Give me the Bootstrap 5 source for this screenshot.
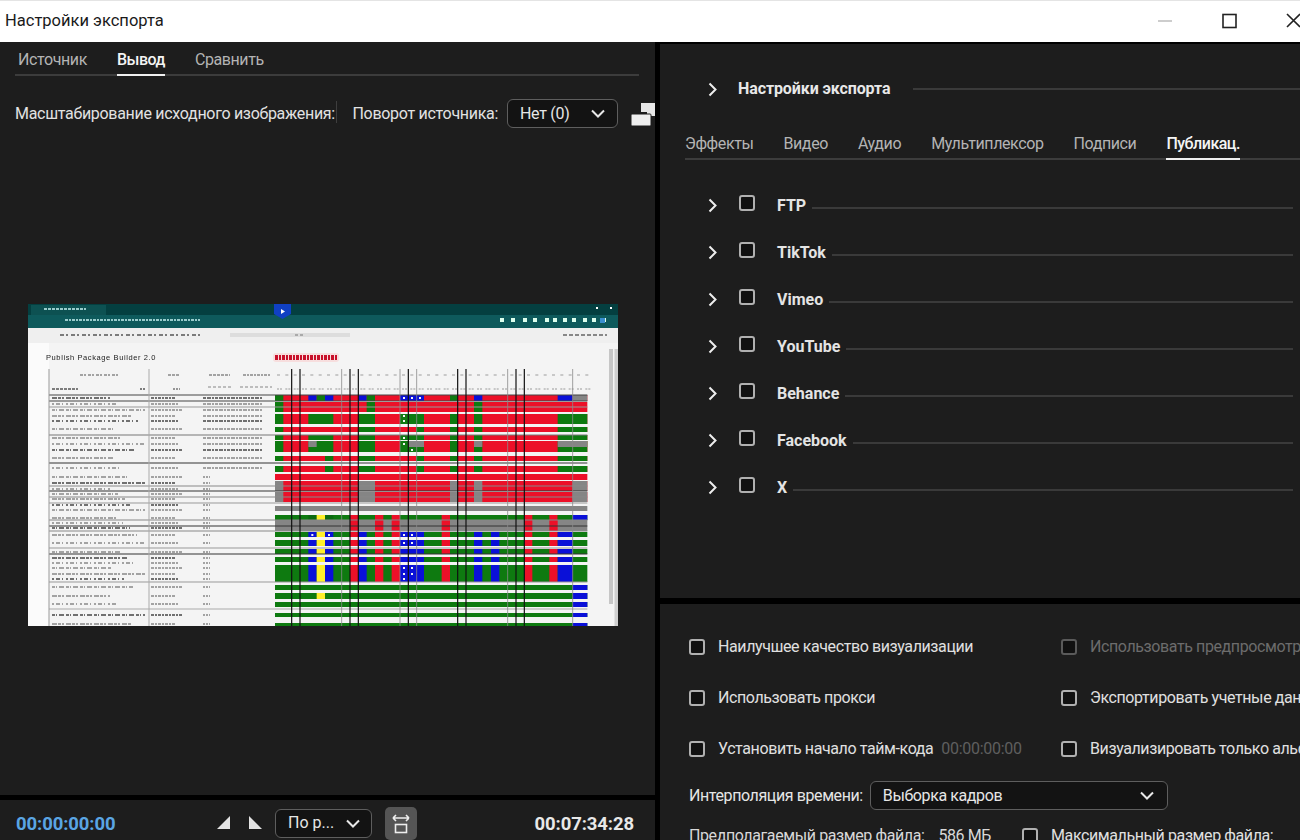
<!DOCTYPE html>
<html lang="ru">
<head>
<meta charset="utf-8">
<title>Настройки экспорта</title>
<link href="https://cdn.jsdelivr.net/npm/bootstrap@5.3.0/dist/css/bootstrap.min.css" rel="stylesheet">
<style>
html,body{height:840px;overflow:hidden}
body{background:#000;font-family:"Roboto","Liberation Sans",sans-serif;font-size:16px;color:#d8d8d8;width:1300px}
.title-strip{height:42px;background:#fff;color:#1a1a1a;border-top:1px solid #e4e4e4;padding-left:5px;font-size:16.5px;flex:none}
.win-btns{margin-left:auto;height:100%;position:relative;width:150px}
.win-btns svg{position:absolute;left:0;top:0}
.work{height:798px}
.left-col{width:655px;flex:none;margin-right:5px}
.left-main{height:753px;background:#1d1d1d;margin-bottom:5px}
.left-foot{height:40px;background:#1d1d1d}
.right-col{width:640px;flex:none}
.right-top{height:554px;background:#1d1d1d;margin-top:2px;margin-bottom:6px;overflow:hidden}
.right-bot{height:236px;background:#1d1d1d;overflow:hidden}
.tab-row{margin:0 16px 0 15px;height:34px;border-bottom:2px solid #3c3c3c;gap:30px;padding-left:3px}
.tab-item{height:34px;padding-top:6px;color:#b4b4b4;white-space:nowrap;letter-spacing:-.4px}
.tab-item.on{color:#f4f4f4;border-bottom:2px solid #f0f0f0;font-weight:500;letter-spacing:-.5px}
.scale-row{height:29px;margin-top:23px;padding-left:15px;white-space:nowrap;color:#e2e2e2;letter-spacing:-.3px}
.tick{width:1px;height:22px;background:#3e3e3e;margin:0 16px 4px 1px}
.pick{border:1.5px solid #5e5e5e;border-radius:6px;background:#131313;color:#e6e6e6;height:29px;white-space:nowrap;justify-content:space-between}
.pick-rot{width:111px;padding:0 12px;margin-left:9px;flex:none}
.rot-ico{margin-left:13px;flex:none}
.thumb{display:block;margin:176px 0 0 28px;filter:blur(.5px)}
.foot-time{font-weight:700;font-size:18.5px;letter-spacing:-.1px;padding-top:9px}
.t-blue{color:#5aa5e4;margin-left:16px;width:199px}
.t-white{color:#e8e8e8;margin-left:auto;margin-right:21px}
.tri-ico{margin-top:6px}
.pick-zoom{width:97px;padding:0 11px 0 12px;margin:6px 13px 0 13px}
.fit-btn{width:32px;height:33px;background:#555;border-radius:5px;margin-top:7px}
.sect-head{height:24px;margin-top:33px;padding-left:48px;font-weight:700;color:#e8e8e8;white-space:nowrap}
.sect-head .sect-label{margin-left:20px;letter-spacing:-.1px}
.rule{flex:1;height:2px;background:#3a3a3a;margin-left:23px;margin-right:0}
.fx-tabs{margin:23px 0 0 25px;height:36px;border-bottom:2px solid #3c3c3c;gap:30px}
.fx-tabs .tab-item{height:36px;padding-top:8px}
.pub-list{margin-top:22px}
.pub-row{height:47px;padding-left:48px;padding-right:7px;font-weight:700;color:#e4e4e4}
.pub-row .form-check-input{margin:-6px 0 0 21px}
.pub-row .pub-name{margin-left:22px;white-space:nowrap}
.pub-row .rule{margin-left:6px;margin-top:5px}
.form-check-input.dark-box{width:16px;height:16px;background-color:#111;border:2px solid #b0b0b0;border-radius:3px;flex:none;float:none}
.form-check-input.dark-box.dim{border-color:#5a5a5a}
.opt-grid{padding:17px 0 0 29px}
.opt-row{height:51px;white-space:nowrap}
.opt-a{width:372px;flex:none}
.opt-lbl{margin-left:13px;color:#e0e0e0;letter-spacing:-.4px}
.opt-lbl.dim{color:#6c6c6c}
.tc-dim{color:#5f5f5f;margin-left:8px;letter-spacing:-.3px}
.interp{height:29px;margin-top:7px;white-space:nowrap;color:#e6e6e6;letter-spacing:-.4px}
.pick-interp{width:298px;padding:0 13px 0 12px;margin-left:7px}
.size-row{margin-top:14px;white-space:nowrap;color:#d8d8d8;letter-spacing:-.4px}
.size-row .form-check-input{margin:0 0 0 31px}
.size-val{margin-left:14px}
</style>
</head>
<body>
<header class="title-strip d-flex align-items-center">
  <span>Настройки экспорта</span>
  <div class="win-btns">
    <svg width="150" height="42" viewBox="1150 0 150 42">
      <path d="M1158 20h14" stroke="#bdbdbd" stroke-width="1.5"/>
      <rect x="1223" y="13.5" width="13" height="13" fill="none" stroke="#222" stroke-width="1.6"/>
      <path d="M1287 13l13 13M1300 13l-13 13" stroke="#222" stroke-width="1.6"/>
    </svg>
  </div>
</header>
<main class="work d-flex">
  <section class="left-col d-flex flex-column">
    <div class="left-main">
      <nav class="tab-row d-flex">
        <span class="tab-item">Источник</span>
        <span class="tab-item on">Вывод</span>
        <span class="tab-item">Сравнить</span>
      </nav>
      <div class="scale-row d-flex align-items-center">
        <span>Масштабирование исходного изображения:</span>
        <span class="tick"></span>
        <span>Поворот источника:</span>
        <div class="pick pick-rot d-flex align-items-center"><span>Нет (0)</span>
          <svg width="14" height="9" viewBox="0 0 14 9"><path d="M1 1.5l6 6 6-6" fill="none" stroke="#e8e8e8" stroke-width="2"/></svg></div>
        <svg class="rot-ico" width="24" height="26" viewBox="0 0 24 26"><path d="M10 2h14v13H16V11h-6z" fill="#e6e6e6"/><rect x="0" y="13" width="20" height="12" rx="1" fill="#efefef" stroke="#1d1d1d"/></svg>
      </div>
      <svg id="thumb" class="thumb" width="590" height="322" viewBox="28 304 590 322" role="img" aria-label="Предпросмотр"></svg>
    </div>
    <div class="left-foot d-flex align-items-center">
      <span class="foot-time t-blue">00:00:00:00</span>
      <svg class="tri-ico" width="47" height="16" viewBox="0 0 47 16"><path d="M2 14L15 1v13z" fill="#e4e4e4"/><path d="M34 1l13 13H34z" fill="#e4e4e4"/></svg>
      <div class="pick pick-zoom d-flex align-items-center"><span>По р...</span>
        <svg width="14" height="9" viewBox="0 0 14 9"><path d="M1 1.5l6 6 6-6" fill="none" stroke="#e8e8e8" stroke-width="2"/></svg></div>
      <div class="fit-btn d-flex align-items-center justify-content-center">
        <svg width="22" height="22" viewBox="0 0 22 22"><path d="M3 5h16M3 5l3-3M3 5l3 3M19 5l-3-3M19 5l-3 3" fill="none" stroke="#eee" stroke-width="1.6"/><rect x="5.5" y="11.5" width="11" height="8" fill="none" stroke="#eee" stroke-width="1.6"/></svg>
      </div>
      <span class="foot-time t-white">00:07:34:28</span>
    </div>
  </section>
  <section class="right-col">
    <div class="right-top">
      <div class="sect-head d-flex align-items-center">
        <svg width="10" height="15" viewBox="0 0 10 15"><path d="M1.500 1.500l6 6-6 6" fill="none" stroke="#eee" stroke-width="2"/></svg>
        <span class="sect-label">Настройки экспорта</span><span class="rule"></span>
      </div>
      <nav class="fx-tabs d-flex">
        <span class="tab-item">Эффекты</span>
        <span class="tab-item">Видео</span>
        <span class="tab-item">Аудио</span>
        <span class="tab-item">Мультиплексор</span>
        <span class="tab-item">Подписи</span>
        <span class="tab-item on">Публикац.</span>
      </nav>
      <div class="pub-list" id="pubs">
        <div class="pub-row d-flex align-items-center"><svg width="10" height="15" viewBox="0 0 10 15"><path d="M1.500 1.500l6 6-6 6" fill="none" stroke="#eee" stroke-width="2"/></svg><input class="form-check-input dark-box" type="checkbox" aria-label="FTP"><span class="pub-name">FTP</span><span class="rule"></span></div>
        <div class="pub-row d-flex align-items-center"><svg width="10" height="15" viewBox="0 0 10 15"><path d="M1.500 1.500l6 6-6 6" fill="none" stroke="#eee" stroke-width="2"/></svg><input class="form-check-input dark-box" type="checkbox" aria-label="TikTok"><span class="pub-name">TikTok</span><span class="rule"></span></div>
        <div class="pub-row d-flex align-items-center"><svg width="10" height="15" viewBox="0 0 10 15"><path d="M1.500 1.500l6 6-6 6" fill="none" stroke="#eee" stroke-width="2"/></svg><input class="form-check-input dark-box" type="checkbox" aria-label="Vimeo"><span class="pub-name">Vimeo</span><span class="rule"></span></div>
        <div class="pub-row d-flex align-items-center"><svg width="10" height="15" viewBox="0 0 10 15"><path d="M1.500 1.500l6 6-6 6" fill="none" stroke="#eee" stroke-width="2"/></svg><input class="form-check-input dark-box" type="checkbox" aria-label="YouTube"><span class="pub-name">YouTube</span><span class="rule"></span></div>
        <div class="pub-row d-flex align-items-center"><svg width="10" height="15" viewBox="0 0 10 15"><path d="M1.500 1.500l6 6-6 6" fill="none" stroke="#eee" stroke-width="2"/></svg><input class="form-check-input dark-box" type="checkbox" aria-label="Behance"><span class="pub-name">Behance</span><span class="rule"></span></div>
        <div class="pub-row d-flex align-items-center"><svg width="10" height="15" viewBox="0 0 10 15"><path d="M1.500 1.500l6 6-6 6" fill="none" stroke="#eee" stroke-width="2"/></svg><input class="form-check-input dark-box" type="checkbox" aria-label="Facebook"><span class="pub-name">Facebook</span><span class="rule"></span></div>
        <div class="pub-row d-flex align-items-center"><svg width="10" height="15" viewBox="0 0 10 15"><path d="M1.500 1.500l6 6-6 6" fill="none" stroke="#eee" stroke-width="2"/></svg><input class="form-check-input dark-box" type="checkbox" aria-label="X"><span class="pub-name">X</span><span class="rule"></span></div>
      </div>
    </div>
    <div class="right-bot">
      <div class="opt-grid">
        <div class="opt-row d-flex align-items-center">
          <div class="opt-a d-flex align-items-center"><input class="form-check-input dark-box m-0" type="checkbox" aria-label="q"><span class="opt-lbl">Наилучшее качество визуализации</span></div>
          <div class="d-flex align-items-center"><input class="form-check-input dark-box dim m-0" type="checkbox" aria-label="p"><span class="opt-lbl dim">Использовать предпросмотры</span></div>
        </div>
        <div class="opt-row d-flex align-items-center">
          <div class="opt-a d-flex align-items-center"><input class="form-check-input dark-box m-0" type="checkbox" aria-label="x"><span class="opt-lbl">Использовать прокси</span></div>
          <div class="d-flex align-items-center"><input class="form-check-input dark-box m-0" type="checkbox" aria-label="e"><span class="opt-lbl">Экспортировать учетные данные</span></div>
        </div>
        <div class="opt-row d-flex align-items-center">
          <div class="opt-a d-flex align-items-center"><input class="form-check-input dark-box m-0" type="checkbox" aria-label="t"><span class="opt-lbl">Установить начало тайм-кода</span><span class="tc-dim">00:00:00:00</span></div>
          <div class="d-flex align-items-center"><input class="form-check-input dark-box m-0" type="checkbox" aria-label="a"><span class="opt-lbl">Визуализировать только альфа-канал</span></div>
        </div>
        <div class="interp d-flex align-items-center">
          <span>Интерполяция времени:</span>
          <div class="pick pick-interp d-flex align-items-center"><span>Выборка кадров</span>
            <svg width="14" height="9" viewBox="0 0 14 9"><path d="M1 1.500l6 6 6-6" fill="none" stroke="#e8e8e8" stroke-width="2"/></svg></div>
        </div>
        <div class="size-row d-flex align-items-center">
          <span>Предполагаемый размер файла:</span><span class="size-val">586 МБ</span>
          <input class="form-check-input dark-box" type="checkbox" aria-label="m"><span class="opt-lbl">Максимальный размер файла:</span>
        </div>
      </div>
    </div>
  </section>
</main>
<script src="https://cdn.jsdelivr.net/npm/bootstrap@5.3.0/dist/js/bootstrap.bundle.min.js"></script>
<script>
(function(){
var G='#0e7a10',R='#ec1028',B='#0a10d8',Y='#fff02a',A='#858585',o=[];
function rect(x,y,w,h,c){o.push('<rect x="'+x+'" y="'+y+'" width="'+w+'" height="'+h+'" fill="'+c+'"/>');}
function line(x1,y1,x2,y2,c,w,d){o.push('<line x1="'+x1+'" y1="'+y1+'" x2="'+x2+'" y2="'+y2+'" stroke="'+c+'" stroke-width="'+w+'"'+(d?' stroke-dasharray="'+d+'"':'')+'/>');}
/* chrome */
rect(28,304,590,322,'#f4f4f4');
rect(28,304,590,11,'#043f40');rect(28,315,590,13,'#0e5a5c');rect(31,305,75,10,'#0d5152');
rect(28,328,590,15,'#efefef');rect(28,343,21,283,'#fbfbfb');
line(44,309,86,309,'#9cc',2,'3 1');line(65,320,200,320,'#9cc',2,'3 1 2 1');
line(60,335,200,335,'#555',1.5,'4 2 2 3');line(230,335,350,335,'#ddd',4);line(295,335,305,335,'#777',1,'3 2');line(563,335,607,335,'#666',1.4,'4 2');
[500,511,523,533,545,553,563,572,583,592,602].forEach(function(x){rect(x,318,4,4,'#dfe');});rect(600,318,5,5,'#3a8fd0');
rect(596,307,2,2,'#fff');rect(610,307,2,2,'#fff');
o.push('<path d="M274 304h17v10l-8.500 5-8.500-5z" fill="#1040c4"/><path d="M281 309l4 2.500-4 2.500z" fill="#fff"/>');
/* heading */
o.push('<text x="46" y="360" font-family="Liberation Sans" font-size="7.500" letter-spacing=".6" fill="#222">Publish Package Builder 2.0</text>');
o.push('<rect x="273" y="353" width="66" height="9" rx="3" fill="#f7dede"/>');line(275,357.500,338,357.500,'#c8102a',5,'3 1 2 1');
/* colour grid */
function X(v){return 270+v/3;}
function row(y0,y1,base,segs){rect(X(15),y0,X(952)-X(15),y1-y0,base);(segs||[]).forEach(function(s){rect(X(s[0]),y0,(s[1]-s[0])/3,y1-y0,s[2]);});}
var gc=[[15,40,G],[290,315,G],[612,637,G]];
var rg=[[15,40,G],[115,190,G],[265,315,G],[390,462,G],[540,563,G],[612,637,G],[863,952,G]];
var rt=[[15,40,G],[165,190,G],[265,315,G],[438,462,G],[540,563,G],[612,637,G],[863,952,G]];
row(395,401,R,[[15,40,G],[115,140,B],[140,165,G],[165,190,B],[265,290,B],[290,315,G],[390,462,B],[540,563,G],[612,637,B],[863,908,B],[908,952,A]]);
row(402,407,R,gc);row(407,412,R,gc);
row(414,419,R,rg);row(419,424,R,rg);
row(427,432,R,[[15,40,G],[265,315,G],[438,462,G],[540,563,G],[612,637,G],[863,952,G]]);
row(435,440,R,rg);
row(441,447,R,rg.concat([[115,140,A],[415,462,A],[612,637,A],[863,952,A]]));
row(447,452,R,rg);row(456,461,R,rt);row(466,472,R,rt);
row(474,480,R);
var gr=[[15,40,A],[265,315,A],[540,563,A],[612,637,A],[908,952,A]];
[[481,486],[486,491],[492,497],[497,502]].forEach(function(r){row(r[0],r[1],R,gr);});
row(506,511,A);
row(515,520,G,[[115,140,'#0c6a10'],[140,165,Y],[165,190,'#0c6a10'],[240,265,R],[315,340,R],[365,390,R],[515,540,R],[763,787,R],[838,863,R],[863,908,G],[908,952,B]]);
var ga=[[240,265,R],[315,340,R],[365,390,R],[515,540,R],[763,787,R],[838,863,R]];
row(520,526,A,ga);row(526,531,A,ga);
var gb=[[115,140,B],[140,165,Y],[165,190,B],[240,265,R],[265,290,B],[315,340,R],[365,390,R],[390,462,B],[515,540,R],[612,637,B],[663,688,B],[763,787,R],[838,863,R],[863,908,B]];
[[532,537],[540,546],[549,554],[557,562],[565,571],[571,577],[577,582]].forEach(function(r){row(r[0],r[1],G,gb);});
var gd=[[908,952,B]];
row(585,590,G,gd);row(593,599,G,gd.concat([[140,165,Y]]));row(602,607,G,gd);row(613,617,G,gd);row(623,626,G,gd);
/* table text */
var ys=[398,404,410,416,421,429,438,444,450,458,468,477,483,489,494,499,505,510,518,523,528,535,543,552,558,563,568,574,579,587,596,604,615,624];
ys.forEach(function(y,i){
  var d=i%3==0?'5 1 3 1 2 2':(i%3==1?'2 2 4 2 1 3':'3 1 1 2 5 2');
  var dark=(i%4==0)?'#444':'#888';
  line(52,y,(i%5==2?145:110+(i*7)%30),y,dark,1.400,d);
  line(151,y,176+(i%3)*3,y,dark,1.400,'3 1 2 1');
  if(i<11)line(203,y,262,y,dark,1.300,'3 1 4 1 2 1');else line(203,y,210,y,'#888',1.300,'2 1');
});
/* table rules */
[[395,'#444'],[401,'#444'],[407,'#999'],[435,'#777'],[463,'#333'],[486,'#888'],[491,'#333'],[497,'#888'],[503,'#999'],[520,'#888'],[526,'#333'],[531,'#888'],[548,'#999'],[554,'#333'],[582,'#999'],[609,'#aaa']].forEach(function(l){line(49,l[0],X(952),l[0],l[1],1);});
line(49,369,49,626,'#999',1);line(149,369,149,626,'#aaa',1);
/* column heads */
line(80,375,118,375,'#888',1.400,'3 1 2 2');line(168,375,180,375,'#888',1.400,'3 1');line(209,375,230,375,'#888',1.400,'3 1');line(243,375,270,375,'#888',1.400,'3 1 2 1');
line(52,389,78,389,'#555',1.400,'3 1');line(140,389,146,389,'#555',1.400,'2 1');line(173,389,180,389,'#777',1.400,'2 1');line(208,387,232,387,'#aaa',1.400,'3 2');line(240,387,272,387,'#aaa',1.400,'3 2');
for(var v=15;v<952;v+=25){line(X(v)+2,375,X(v)+5,375,'#aaa',1.200);line(X(v)+2,389,X(v)+7,389,'#999',1.200,'2 1');}
/* column rules */
[65,90,240,265,415,563,588,738,763].forEach(function(v){line(X(v),369,X(v),626,'#111',1.200);});
[215,390,440,713,908].forEach(function(v){line(X(v),369,X(v),626,'#8a8a8a',.8);});
/* white-dot cell marks */
[[398,402],[398,426],[398,450],[416,402],[421,402],[438,402],[444,402],[450,426],[535,127],[535,177],[535,402],[535,426],[543,402],[543,426],[568,402],[568,426],[574,402],[574,426],[579,402]].forEach(function(p){rect(X(p[1])-1,p[0]-1,2,2,'#f2f2f2');});
/* scrollbars */
rect(609,349,4,255,'#c6c6c6');rect(614.500,349,3.500,277,'#cfcfcf');
document.getElementById('thumb').innerHTML=o.join('');
})();
</script>
</body>
</html>
